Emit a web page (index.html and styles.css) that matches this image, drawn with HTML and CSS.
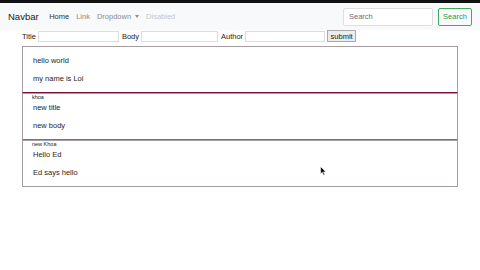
FILE: index.html
```html
<!DOCTYPE html>
<html lang="en">
<head>
    <meta charset="UTF-8">
    <title>Posts</title>
    <link rel="stylesheet" href="styles.css">
</head>
<body>
    <!-- Window edge -->
    <div class="top-edge"></div>

    <!-- Navbar -->
    <nav class="navbar">
        <a class="brand" href="#">Navbar</a>
        <div class="nav-links">
            <a href="#" class="active">Home</a>
            <a href="#">Link</a>
            <a href="#" class="dropdown">Dropdown</a>
            <a href="#" class="disabled">Disabled</a>
        </div>
        <form class="search">
            <input type="text" placeholder="Search">
            <button type="button">Search</button>
        </form>
    </nav>

    <!-- New post form -->
    <form class="post-form">
        <label>Title</label>
        <input type="text" class="f-title">
        <label>Body</label>
        <input type="text" class="f-body">
        <label>Author</label>
        <input type="text" class="f-author">
        <button type="button">submit</button>
    </form>

    <!-- Posts -->
    <div class="posts">
        <div class="post">
            <p>hello world</p>
            <p class="body">my name is Loi</p>
        </div>
        <div class="author">khoa</div>

        <div class="post">
            <p>new title</p>
            <p class="body">new body</p>
        </div>
        <div class="author">new Khoa</div>

        <div class="post">
            <p>Hello Ed</p>
            <p class="body">Ed says hello</p>
        </div>
        <div class="author">Ed</div>
    </div>

    <!-- mouse pointer -->
    <svg class="pointer" width="7" height="10" viewBox="0 0 7 10">
        <path d="M0.5 0.5 L0.5 8 L2.3 6.3 L3.6 9.3 L4.8 8.8 L3.6 5.9 L6 5.9 Z" fill="#111" stroke="#fff" stroke-width="0.6"/>
    </svg>
</body>
</html>
```

FILE: styles.css
```css
/* Basic page */
body {
    font-family: "Liberation Sans", Arial, sans-serif;
    margin: 0;
    padding: 0;
    background-color: white;
    color: #222;
    font-size: 7.5px;
}

.top-edge {
    height: 3px;
    background-color: #111;
}

/* Navbar */
.navbar {
    display: flex;
    align-items: center;
    height: 27px;
    padding: 0 8px;
    background-color: #f8f9fa;
}

.brand {
    font-size: 9.5px;
    color: #222;
    text-decoration: none;
    margin-right: 7px;
}

.nav-links {
    display: flex;
    flex-grow: 1;
}

.nav-links a {
    text-decoration: none;
    color: #8c8c8c;
    padding: 0 3.5px;
}

.nav-links a.active {
    color: #333;
}

.nav-links a.disabled {
    color: #c8c8c8;
}

.dropdown::after {
    content: "";
    display: inline-block;
    margin-left: 4px;
    vertical-align: 1px;
    border-top: 3px solid #8c8c8c;
    border-left: 2.5px solid transparent;
    border-right: 2.5px solid transparent;
}

.search {
    display: flex;
    margin: 0;
}

.search input {
    width: 90px;
    height: 18px;
    box-sizing: border-box;
    border: 1px solid #dedede;
    border-radius: 2px;
    padding: 0 5px;
    font-family: inherit;
    font-size: 7.5px;
    margin-right: 5px;
    background: white;
}

.search input::placeholder {
    color: #6f6f6f;
}

.search button {
    width: 34px;
    height: 18px;
    border: 1px solid #46a85c;
    border-radius: 2px;
    background: #f8f9fa;
    color: #2f9a4a;
    font-family: inherit;
    font-size: 7.5px;
    padding: 0;
}

/* Post form */
.post-form {
    display: flex;
    align-items: center;
    margin: 0;
    padding: 0 22px;
    height: 12px;
}

.post-form label {
    margin-right: 2px;
}

.post-form input {
    height: 11px;
    box-sizing: border-box;
    border: 1px solid #dcdcdc;
    margin: 0 3px 0 0;
    padding: 0;
}

.f-title { width: 81px; }
.f-body { width: 77px; }
.f-author { width: 80px; margin-right: 2px !important; }

.post-form button {
    height: 12px;
    width: 29px;
    padding: 0;
    border: 1px solid #a9a9a9;
    background-color: #ececec;
    color: #222;
    font-family: inherit;
    font-size: 7.5px;
}

/* Posts */
.posts {
    margin: 4px 22px 0;
}

.post {
    border: 1px solid #a69da0;
    padding: 9px 10px 8px;
}

.post p {
    margin: 0;
    line-height: 10px;
    color: #1e1e1e;
}

.post p.body {
    margin-top: 8px;
}

.post:first-child {
    border-bottom-color: #74122f;
}

.post:nth-child(3) {
    border-bottom-color: #8a6a74;
}

.author {
    font-size: 5.5px;
    line-height: 8px;
    height: 8px;
    padding-left: 10px;
    margin-bottom: -8px;
}

.pointer {
    position: absolute;
    left: 320px;
    top: 166px;
}
```
